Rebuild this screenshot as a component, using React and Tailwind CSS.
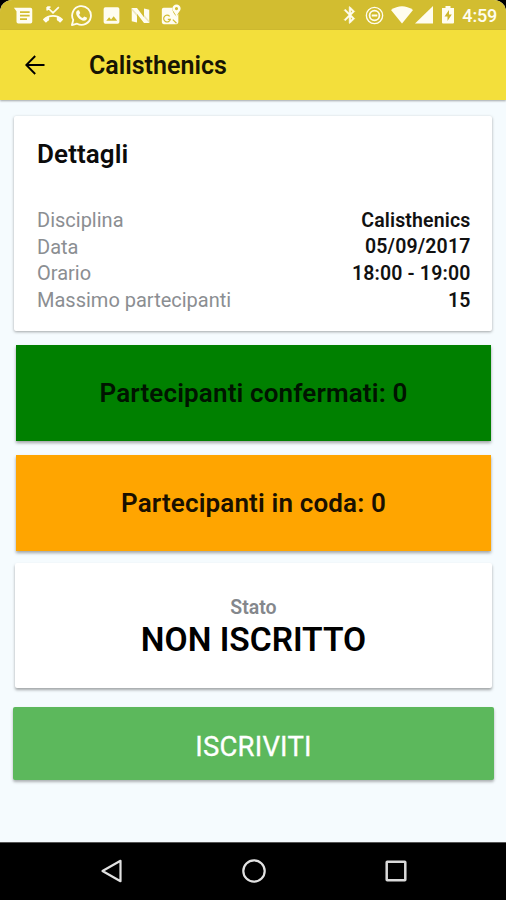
import React from 'react';

function Icon({ children, className = '' }) {
  return (
    <svg viewBox="0 0 24 24" className={`shrink-0 fill-[#fffdf0] ${className}`}>
      {children}
    </svg>
  );
}

function StatusBar() {
  return (
    <div className="flex h-[30px] items-center justify-between bg-[#d2bd30] pl-[13px] pr-[9px]">
      <div className="flex items-center gap-[8.5px]">
        <Icon className="size-[21px]">
          <path d="M1 3h19a2 2 0 0 1 2 2v14a2 2 0 0 1-2 2H6a2 2 0 0 1-2-2V7zM8 7v2h11V7zm0 4v2h11v-2zm0 4v2h8v-2z" fillRule="evenodd" />
        </Icon>
        <Icon className="size-[20px]">
          <path d="M5 2.500v4M5 2.500h4M5.500 3L12 9.500 19 2.500" fill="none" stroke="#fffdf0" strokeWidth="2" />
          <path d="M23.710 16.670C20.660 13.780 16.540 12 12 12 7.460 12 3.340 13.780.290 16.670c-.180.180-.290.430-.290.710s.110.530.290.710l2.480 2.480c.180.180.430.290.710.290.270 0 .520-.110.700-.280.790-.740 1.690-1.360 2.660-1.850.330-.160.560-.500.560-.900v-3.100C8.850 14.250 10.400 14 12 14s3.150.250 4.590.730v3.100c0 .400.230.740.560.900.980.490 1.870 1.120 2.670 1.850.180.180.430.280.700.280.280 0 .530-.110.710-.290l2.480-2.480c.180-.180.290-.430.290-.710s-.120-.530-.290-.710z" />
        </Icon>
        <Icon className="-mx-px size-[23px]">
          <path d="M2 22l1.400-5.400A9.800 9.800 0 1 1 7.400 20.600z" fill="none" stroke="#fffdf0" strokeWidth="1.900" strokeLinejoin="round" />
          <path d="M8.200 6.500h1.200l1.300 2.900-1.200 1.700c.9 1.700 2 2.700 3.900 3.500l1.400-1.600 3 1.400c-.1 2-1.400 3.100-3.300 3.100-4.300-.5-8.100-4.200-8.100-8.300 0-1.200.8-2.200 1.800-2.700z" />
        </Icon>
        <Icon className="size-[21px]">
          <path d="M5 2.500h14a2 2 0 0 1 2 2v15a2 2 0 0 1-2 2H5a2 2 0 0 1-2-2v-15a2 2 0 0 1 2-2zM6 18h12.500l-4-5.200-3 3.700-2.200-2.600z" fillRule="evenodd" />
        </Icon>
        <Icon className="size-[21px]">
          <path d="M2 3.500h6l8 10.500V4l6 1.500v15h-6L8 10v10l-6-1.500z" />
          <path d="M2 3.500L8 10v3L2 6zM22 20.500L16 14v-3l6 7z" className="fill-[#eee7bd]" />
        </Icon>
        <Icon className="size-[22px]">
          <path d="M4 4h9.500c-.3 4 1.500 6.500 4.500 9.500l2-3V20a2 2 0 0 1-2 2H4a2 2 0 0 1-2-2V6a2 2 0 0 1 2-2z" />
          <path d="M10.500 13.500a3.700 3.700 0 1 0 .8 3.300H8.500M14 17l4 4" fill="none" stroke="#d2bd30" strokeWidth="1.300" />
          <path d="M18 .5a4.500 4.500 0 0 0-4.500 4.500c0 3.200 3.500 4.500 4.500 9.500 1-5 4.500-6.300 4.500-9.500A4.500 4.500 0 0 0 18 .5zm0 2.800a1.700 1.700 0 1 1 0 3.400 1.700 1.700 0 0 1 0-3.400z" fillRule="evenodd" />
        </Icon>
      </div>
      <div className="flex items-center">
        <Icon className="mr-[5px] size-[20px]">
          <path d="M17.710 7.710L12 2h-1v7.590L6.410 5 5 6.410 10.590 12 5 17.590 6.410 19 11 14.410V22h1l5.710-5.710-4.300-4.290 4.300-4.290zM13 5.830l1.880 1.880L13 9.590V5.830zm1.880 10.460L13 18.170v-3.760l1.880 1.880z" stroke="#fffdf0" strokeWidth=".6" />
        </Icon>
        <Icon className="mr-[7px] size-[19px]">
          <circle cx="12" cy="12" r="10.300" fill="none" stroke="#fffdf0" strokeWidth="1.700" />
          <circle cx="12" cy="12" r="6.200" fill="none" stroke="#fffdf0" strokeWidth="2.200" />
          <path d="M8.500 10.800h7v2.400h-7z" />
        </Icon>
        <svg viewBox="0 0 22 18" className="mr-[2px] h-[18px] w-[22px] fill-[#fffdf0]">
          <path d="M0 4Q11-3.500 22 4L11 17.500z" />
        </svg>
        <svg viewBox="0 0 18 18" className="mr-[9px] h-[18px] w-[18px] fill-[#fffdf0]">
          <path d="M18 0v17.500H0z" />
        </svg>
        <svg viewBox="0 0 12 18" className="mr-[8px] h-[18px] w-[12px] fill-[#fffdf0]">
          <path d="M3.500 0h5v2H12v14.500q0 1-1 1H1q-1 0-1-1V2h3.500z" />
          <path d="M7 4L2.500 10.500H5.500V15L9.800 8.500H7z" className="fill-[#cdb72d]" />
        </svg>
        <span className="pt-[2px] text-[18px] leading-[30px] font-medium tracking-[-0.2px] text-[#fffdf0]">
          4:59
        </span>
      </div>
    </div>
  );
}

function Toolbar() {
  return (
    <header className="flex h-[69.5px] items-center bg-[#f3df3b] pl-[25px] shadow-[0_1px_2px_rgba(0,0,0,0.35)]">
      <svg viewBox="0 0 20 20" className="mr-[44px] size-[20px] fill-none stroke-black stroke-[1.900]">
        <path d="M19.500 10H2M10.200 1L1.300 10l8.900 9" />
      </svg>
      <h1 className="pt-[2px] text-[25px] font-semibold whitespace-nowrap text-[#161404]">Calisthenics</h1>
    </header>
  );
}

const details = [
  ['Disciplina', 'Calisthenics'],
  ['Data', '05/09/2017'],
  ['Orario', '18:00 - 19:00'],
  ['Massimo partecipanti', '15'],
];

function DetailsCard() {
  return (
    <section className="mx-[14px] mt-[16.500px] h-[215px] rounded-[2px] bg-white px-[23px] pt-[20px] shadow-[0_1px_3px_rgba(0,0,0,0.35)]">
      <h2 className="text-[26px] leading-[36px] font-semibold tracking-[0.1px] text-[#0b0b0b]">Dettagli</h2>
      <dl className="mt-[34.500px]">
        {details.map(([label, value]) => (
          <div key={label} className="flex h-[26.700px] items-center justify-between text-[20px] whitespace-nowrap">
            <dt className="text-[#8b8e92]">{label}</dt>
            <dd className="mr-[-1.500px] pt-px text-[19.500px] font-semibold tracking-[0.150px] text-[#111]">{value}</dd>
          </div>
        ))}
      </dl>
    </section>
  );
}

function NavigationBar() {
  return (
    <nav className="flex h-[58px] items-center justify-between border-t border-[#555] bg-black pr-[98px] pb-[2px] pl-[100px]">
      <svg viewBox="0 0 24 24" className="size-[24px] fill-none stroke-[#e2e2e2] stroke-[2.200]">
        <path d="M20.500 1.800v20.400L2.500 12z" strokeLinejoin="round" />
      </svg>
      <svg viewBox="0 0 24 24" className="size-[24px] fill-none stroke-[#e2e2e2] stroke-[2.200]">
        <circle cx="12" cy="12" r="10.700" />
      </svg>
      <svg viewBox="0 0 24 24" className="size-[24px] fill-none stroke-[#dadada] stroke-[2.500]">
        <rect x="2.700" y="2.700" width="18.600" height="18.600" rx=".5" />
      </svg>
    </nav>
  );
}

export default function App() {
  return (
    <div className="h-[900px] w-[506px] overflow-hidden bg-black font-['Roboto','Liberation_Sans',sans-serif]">
      <div className="flex h-full flex-col overflow-hidden rounded-t-[12px] bg-[#f5fbfe]">
        <StatusBar />
        <Toolbar />
        <main className="min-h-0 flex-1">
          <DetailsCard />
          <section className="mr-[15px] ml-[16px] mt-[13.500px] flex h-[96px] items-center justify-center bg-[#008000] pt-px text-[26px] font-semibold tracking-[0.150px] text-[#001400] shadow-[0_2px_3px_rgba(0,0,0,0.35)]">
            Partecipanti confermati: 0
          </section>
          <section className="mr-[15px] ml-[16px] mt-[14.500px] flex h-[96px] items-center justify-center bg-[#ffa500] pt-px text-[26px] font-semibold tracking-[0.150px] text-[#191000] shadow-[0_2px_3px_rgba(0,0,0,0.35)]">
            Partecipanti in coda: 0
          </section>
          <section className="mr-[14px] ml-[15px] mt-[12px] flex h-[124.500px] flex-col items-center rounded-[2px] bg-white pt-[32px] shadow-[0_2px_3px_rgba(0,0,0,0.35)]">
            <span className="text-[19.500px] leading-[25px] font-semibold text-[#84878c]">Stato</span>
            <strong className="text-[33.500px] leading-[39px] font-semibold text-black">NON ISCRITTO</strong>
          </section>
          <button className="mx-[13px] mt-[19px] flex h-[73px] w-[481px] items-center justify-center rounded-[2px] bg-[#5cb85c] pt-[8px] text-[27.500px] tracking-[0.2px] text-white [-webkit-text-stroke:0.3px_white] shadow-[0_2px_3px_rgba(0,0,0,0.3)]">
            ISCRIVITI
          </button>
        </main>
        <NavigationBar />
      </div>
    </div>
  );
}
